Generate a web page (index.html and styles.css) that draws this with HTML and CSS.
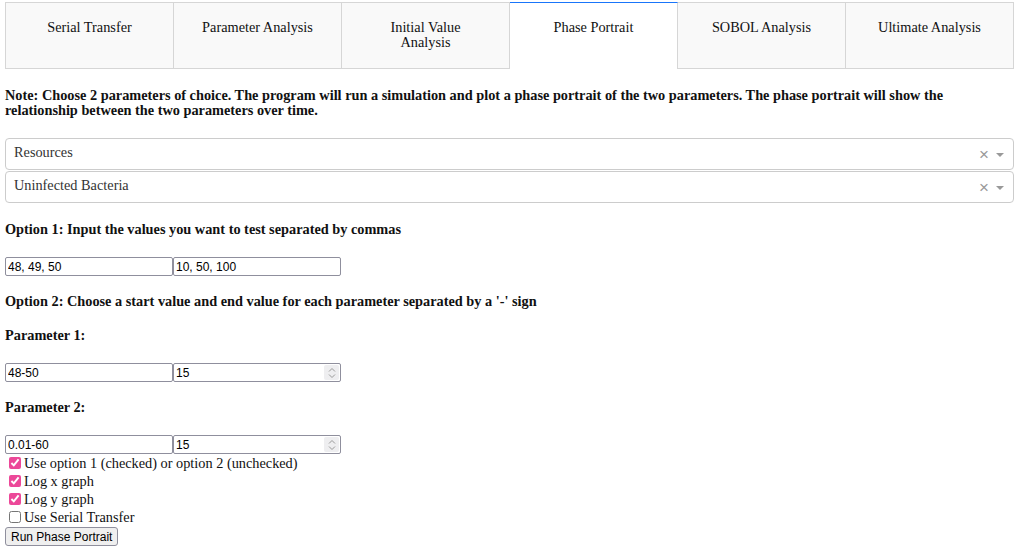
FILE: index.html
```html
<!DOCTYPE html>
<html>
<head>
<meta charset="utf-8">
<link rel="stylesheet" href="styles.css">
</head>
<body>
<div class="page">
  <div class="tabs">
    <div class="tab">Serial Transfer</div>
    <div class="tab">Parameter Analysis</div>
    <div class="tab">Initial Value<br>Analysis</div>
    <div class="tab tab-active">Phase Portrait</div>
    <div class="tab">SOBOL Analysis</div>
    <div class="tab">Ultimate Analysis</div>
  </div>

  <h5 class="heading note">Note: Choose 2 parameters of choice. The program will run a simulation and plot a phase portrait of the two parameters. The phase portrait will show the relationship between the two parameters over time.</h5>

  <div class="dropdowns">
    <div class="dropdown">
      <span class="dd-value">Resources</span>
      <span class="dd-clear">×</span>
      <span class="dd-arrow"></span>
    </div>
    <div class="dropdown">
      <span class="dd-value">Uninfected Bacteria</span>
      <span class="dd-clear">×</span>
      <span class="dd-arrow"></span>
    </div>
  </div>

  <h5 class="heading">Option 1: Input the values you want to test separated by commas</h5>
  <div class="input-row">
    <input class="field" type="text" value="48, 49, 50">
    <input class="field" type="text" value="10, 50, 100">
  </div>

  <h5 class="heading">Option 2: Choose a start value and end value for each parameter separated by a '-' sign</h5>
  <h5 class="heading">Parameter 1:</h5>
  <div class="input-row">
    <input class="field" type="text" value="48-50">
    <div class="field number">
      <input class="num-input" type="text" value="15">
      <span class="spinner"><svg width="8" height="12" viewBox="0 0 8 12"><path d="M1 4.5 L4 1.5 L7 4.5 M1 7.5 L4 10.5 L7 7.5" fill="none" stroke="#9a9a9a" stroke-width="1"/></svg></span>
    </div>
  </div>

  <h5 class="heading">Parameter 2:</h5>
  <div class="input-row">
    <input class="field" type="text" value="0.01-60">
    <div class="field number">
      <input class="num-input" type="text" value="15">
      <span class="spinner"><svg width="8" height="12" viewBox="0 0 8 12"><path d="M1 4.5 L4 1.5 L7 4.5 M1 7.5 L4 10.5 L7 7.5" fill="none" stroke="#9a9a9a" stroke-width="1"/></svg></span>
    </div>
  </div>

  <div class="checks">
    <label class="check"><input type="checkbox" checked> Use option 1 (checked) or option 2 (unchecked)</label>
    <label class="check"><input type="checkbox" checked> Log x graph</label>
    <label class="check"><input type="checkbox" checked> Log y graph</label>
    <label class="check"><input type="checkbox"> Use Serial Transfer</label>
  </div>
  <button class="run-btn">Run Phase Portrait</button>
</div>
</body>
</html>
```

FILE: styles.css
```css
html, body {
  margin: 0;
  padding: 0;
  background: #ffffff;
}
body {
  font-family: "Liberation Serif", "Times New Roman", serif;
  font-size: 14.3px;
  line-height: 15px;
  color: #111;
}
.page {
  padding: 2px 6px 0 5px;
}
.tabs {
  display: flex;
}
.tab {
  flex: 1;
  box-sizing: border-box;
  height: 67px;
  padding-top: 17px;
  text-align: center;
  background: #f9f9f9;
  border: 1px solid #d6d6d6;
  border-left: none;
  color: #111;
}
.tab:first-child {
  border-left: 1px solid #d6d6d6;
}
.tab-active {
  background: #ffffff;
  border-top: 1px solid #1975fa;
  border-bottom: none;
}
.heading {
  font-size: 14.3px;
  font-weight: bold;
  line-height: 15px;
  margin: 19px 0;
}
.note {
  margin-top: 19px;
  margin-bottom: 20px;
}
.dropdowns {
  display: flex;
  flex-direction: column;
  margin-bottom: 15px;
}
.dropdown {
  display: flex;
  align-items: center;
  box-sizing: border-box;
  height: 32px;
  border: 1px solid #cccccc;
  border-radius: 4px;
  padding: 0 9px 0 8px;
  color: #333;
}
.dropdown + .dropdown {
  margin-top: 1px;
}
.dd-value {
  flex: 1;
  padding-bottom: 4px;
}
.dd-clear {
  font-family: "Liberation Sans", Arial, sans-serif;
  font-size: 17px;
  color: #999;
  margin-right: 7px;
  line-height: 1;
}
.dd-arrow {
  width: 0;
  height: 0;
  border-left: 4px solid transparent;
  border-right: 4px solid transparent;
  border-top: 4px solid #999;
  margin-top: 1px;
}
.input-row {
  display: flex;
  height: 19px;
  margin-top: 20px;
}
.input-row + .heading {
  margin-top: 18px;
}
.field {
  box-sizing: border-box;
  width: 168px;
  height: 19px;
  margin: 0;
  padding: 0 2px;
  border: 1px solid #8f8f9d;
  border-radius: 2px;
  font-family: "Liberation Sans", Arial, sans-serif;
  font-size: 12px;
  color: #000;
  background: #fff;
}
.number {
  display: flex;
  align-items: center;
  padding-right: 1px;
}
.num-input {
  flex: 1;
  min-width: 0;
  border: none;
  outline: none;
  padding: 0;
  margin: 0;
  font-family: "Liberation Sans", Arial, sans-serif;
  font-size: 12px;
  background: transparent;
}
.spinner {
  display: flex;
  align-items: center;
  justify-content: center;
  width: 15px;
  height: 15px;
  background: #eeeef0;
  border-radius: 2px;
}
.checks {
  display: flex;
  flex-direction: column;
}
.check {
  display: flex;
  align-items: center;
  height: 18px;
  padding-left: 3px;
}
.check input {
  width: 12px;
  height: 12px;
  margin: 0 3px 0 1px;
  accent-color: #ec4899;
}
.run-btn {
  margin-top: 1px;
  height: 19px;
  padding: 0 5px;
  font-family: "Liberation Sans", Arial, sans-serif;
  font-size: 12px;
  color: #000;
  background: #efefef;
  border: 1px solid #8f8f9d;
  border-radius: 3px;
}
```
